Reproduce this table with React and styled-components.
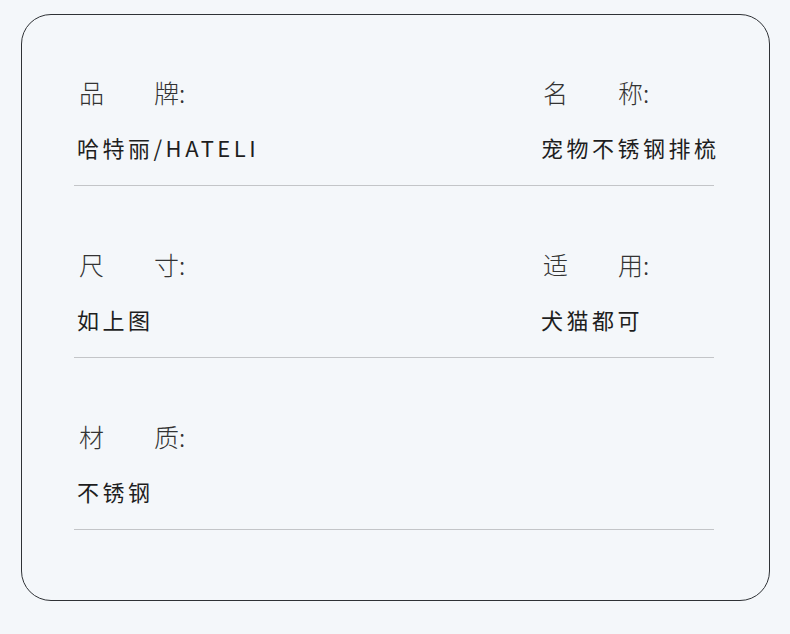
import React from 'react'
import styled, { createGlobalStyle } from 'styled-components'

const GlobalStyle = createGlobalStyle`
  html, body {
    margin: 0;
    padding: 0;
    background: #f4f7fa;
  }
  body {
    font-family: "Noto Sans CJK SC", "Noto Sans", sans-serif;
    color: #333;
  }
`

const specs = [
  [
    { label: ['品', '牌'], value: '哈特丽/HATELI' },
    { label: ['名', '称'], value: '宠物不锈钢排梳' },
  ],
  [
    { label: ['尺', '寸'], value: '如上图' },
    { label: ['适', '用'], value: '犬猫都可' },
  ],
  [
    { label: ['材', '质'], value: '不锈钢' },
  ],
]

const App = () => {
  return (
    <>
      <GlobalStyle />
      <Card>
        {specs.map((row, i) => (
          <Section key={i}>
            {row.map((item, j) => (
              <Field key={j}>
                <Label>
                  {item.label[0]}
                  {'\u3000\u3000'}
                  {item.label[1]}:
                </Label>
                <Value>{item.value}</Value>
              </Field>
            ))}
          </Section>
        ))}
      </Card>
    </>
  )
}

const Card = styled.div`
  box-sizing: border-box;
  width: 749px;
  height: 587px;
  margin: 14px 0 0 21px;
  border: 1px solid #2f3236;
  border-radius: 30px;
  background: #f4f7fa;
  padding: 0 55px 0 52px;
`

const Section = styled.div`
  display: grid;
  grid-template-columns: 464px 1fr;
  padding: 63px 0 23px 3px;
  border-bottom: 1px solid #c3c5c8;
  &:first-child {
    padding-top: 62px;
  }
`

const Field = styled.div`
  display: flex;
  flex-direction: column;
  gap: 25px;
`

const Label = styled.div`
  margin-left: 2px;
  font-size: 25px;
  line-height: 30px;
  font-weight: 300;
  color: #333;
  white-space: pre;
`

const Value = styled.div`
  font-size: 22px;
  line-height: 30px;
  font-weight: 400;
  letter-spacing: 3.5px;
  color: #1e1e1e;
  white-space: nowrap;
`

export default App
